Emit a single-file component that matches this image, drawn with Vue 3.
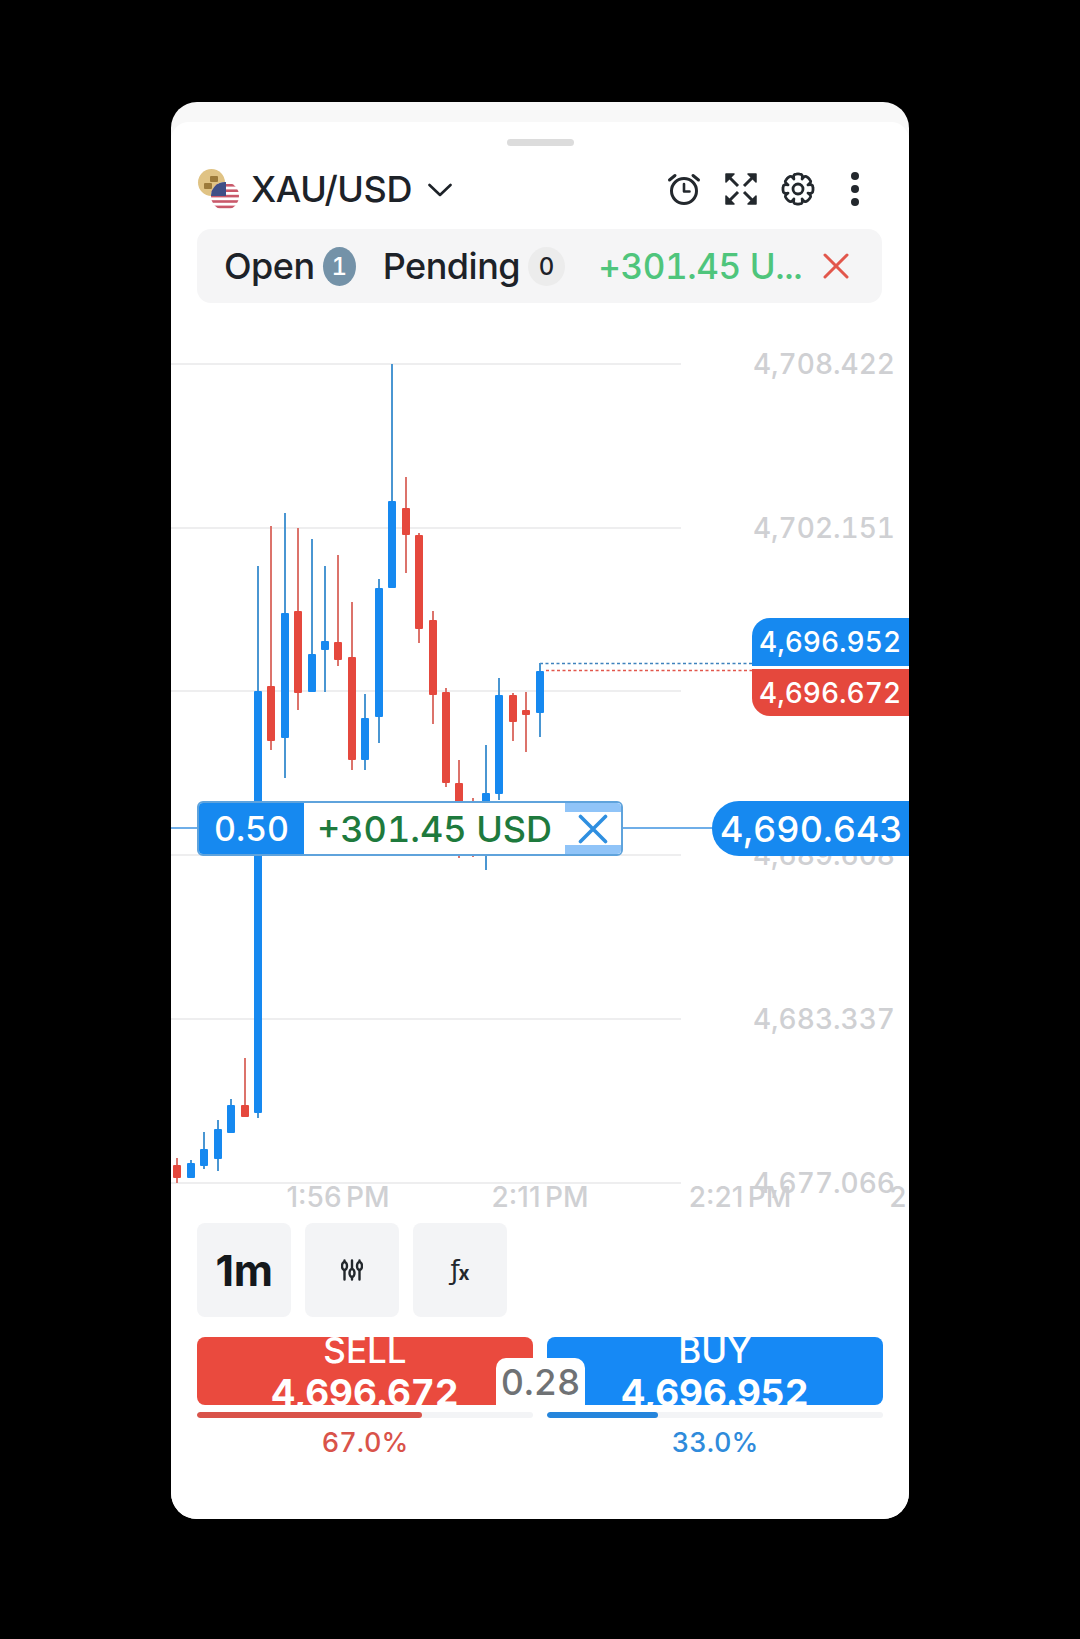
<script setup>
const candles = [
  [177, 1158, 1183, 1165, 1178, 'r'],
  [191, 1160, 1178, 1163, 1178, 'b'],
  [204, 1132, 1169, 1149, 1166, 'b'],
  [218, 1120, 1171, 1129, 1159, 'b'],
  [231, 1099, 1133, 1105, 1133, 'b'],
  [245, 1058, 1117, 1105, 1117, 'r'],
  [258, 566, 1118, 691, 1113, 'b'],
  [271, 526, 750, 686, 741, 'r'],
  [285, 513, 778, 613, 738, 'b'],
  [298, 528, 710, 611, 693, 'r'],
  [312, 539, 692, 654, 692, 'b'],
  [325, 566, 692, 641, 650, 'b'],
  [338, 555, 666, 642, 660, 'r'],
  [352, 602, 770, 657, 760, 'r'],
  [365, 694, 770, 718, 760, 'b'],
  [379, 579, 743, 588, 717, 'b'],
  [392, 364, 588, 501, 588, 'b'],
  [406, 477, 573, 508, 535, 'r'],
  [419, 533, 643, 535, 629, 'r'],
  [433, 611, 724, 620, 695, 'r'],
  [446, 688, 787, 692, 783, 'r'],
  [459, 760, 858, 783, 830, 'r'],
  [473, 798, 857, 810, 815, 'r'],
  [486, 745, 870, 793, 812, 'b'],
  [499, 678, 800, 695, 794, 'b'],
  [513, 693, 741, 695, 722, 'r'],
  [526, 692, 752, 710, 715, 'r'],
  [540, 663, 737, 671, 713, 'b'],
]

const gridLines = [364, 528, 691, 855, 1019, 1183]
const priceLabels = [
  ['4,708.422', 364],
  ['4,702.151', 528],
  ['4,689.608', 855],
  ['4,683.337', 1019],
  ['4,677.066', 1183],
]
const timeLabels = [
  ['1:56 PM', 338],
  ['2:11 PM', 540],
  ['2:21 PM', 740],
  ['2', 898],
]

// scalloped 8 lobe outline for the settings icon
function gearPath() {
  const lobes = 8
  let d = ''
  for (let i = 0; i < lobes; i++) {
    const a = (i / lobes) * Math.PI * 2
    const step = Math.PI / lobes
    const p = (r, t) => `${(17 + r * Math.cos(t)).toFixed(2)} ${(17 + r * Math.sin(t)).toFixed(2)}`
    d += `${i === 0 ? 'M' : 'L'}${p(10.8, a - step)} `
    d += `C${p(13.5, a - step * 0.9)} ${p(15.6, a - step * 0.75)} ${p(15, a - step * 0.3)} `
    d += `C${p(15.2, a)} ${p(15.2, a)} ${p(15, a + step * 0.3)} `
    d += `C${p(15.6, a + step * 0.75)} ${p(13.5, a + step * 0.9)} ${p(10.8, a + step)} `
  }
  return d + 'Z'
}
const gear = gearPath()
</script>

<template>
  <div class="page">
    <div class="card">
      <div class="sheet">
        <div class="handle"></div>

        <div class="header">
          <svg class="pair" width="44" height="44" viewBox="0 0 44 44">
            <defs>
              <clipPath id="flagClip"><circle cx="28" cy="28" r="14" /></clipPath>
            </defs>
            <circle cx="14.5" cy="14.5" r="13.5" fill="#e0c384" />
            <rect x="13" y="8" width="8" height="6" rx="1" fill="#9c7a3a" />
            <rect x="7" y="15" width="8" height="6" rx="1" fill="#9c7a3a" />
            <g clip-path="url(#flagClip)">
              <rect x="14" y="14" width="28" height="28" fill="#fff" />
              <rect x="14" y="16" width="28" height="2.6" fill="#c9596a" />
              <rect x="14" y="21.4" width="28" height="2.6" fill="#c9596a" />
              <rect x="14" y="26.8" width="28" height="2.6" fill="#c9596a" />
              <rect x="14" y="32.2" width="28" height="2.6" fill="#c9596a" />
              <rect x="14" y="37.6" width="28" height="2.6" fill="#c9596a" />
              <rect x="14" y="14" width="15" height="14" fill="#3f4f86" />
            </g>
          </svg>
          <span class="symbol">XAU/USD</span>
          <svg class="chevron" width="24" height="14" viewBox="0 0 24 14">
            <path d="M1.5 2 12 12 22.500 2" fill="none" stroke="#1d2228" stroke-width="2.600" stroke-linecap="round" stroke-linejoin="round" />
          </svg>
          <div class="tools">
            <svg class="tool" width="34" height="34" viewBox="0 0 34 34" fill="none" stroke="#23282d" stroke-width="3" stroke-linecap="round" stroke-linejoin="round">
              <circle cx="17" cy="19" r="12.500" />
              <path d="M17 12v7.500h5.500" stroke-width="2.600" />
              <path d="M2.500 8 8 3.500M31.500 8 26 3.500" />
            </svg>
            <svg class="tool" width="34" height="34" viewBox="0 0 34 34" fill="#23282d" stroke="#23282d" stroke-width="3">
              <path d="M2 10V2h8z" stroke-width="1.500" stroke-linejoin="round" />
              <path d="M5 5l9 9" />
              <path d="M32 10V2h-8z" stroke-width="1.500" stroke-linejoin="round" />
              <path d="M29 5l-9 9" />
              <path d="M2 24v8h8z" stroke-width="1.500" stroke-linejoin="round" />
              <path d="M5 29l9-9" />
              <path d="M32 24v8h-8z" stroke-width="1.500" stroke-linejoin="round" />
              <path d="M29 29l-9-9" />
            </svg>
            <svg class="tool" width="34" height="34" viewBox="0 0 34 34" fill="none" stroke="#23282d" stroke-width="2.800" stroke-linejoin="round">
              <path :d="gear" />
              <circle cx="17" cy="17" r="5" />
            </svg>
            <div class="dots"><i></i><i></i><i></i></div>
          </div>
        </div>

        <div class="tabs">
          <span class="tab">Open</span>
          <span class="badge badge-open">1</span>
          <span class="tab tab-pending">Pending</span>
          <span class="badge badge-pending">0</span>
          <span class="pnl">+301.45 U...</span>
          <svg class="close-all" width="26" height="26" viewBox="0 0 26 26">
            <path d="M2 2l22 22M24 2 2 24" stroke="#e2574c" stroke-width="3" stroke-linecap="round" />
          </svg>
        </div>

        <div class="chart">
          <svg class="plot" width="738" height="920" viewBox="171 303 738 920">
            <line v-for="y in gridLines" :key="y" x1="171" x2="681" :y1="y" :y2="y" stroke="#e8e9ea" stroke-width="1.500" />
            <text v-for="p in priceLabels" :key="p[0]" x="895" :y="p[1] + 10" text-anchor="end" class="axis axis-price">{{ p[0] }}</text>
            <text v-for="t in timeLabels" :key="t[0]" :x="t[1]" y="1207" text-anchor="middle" class="axis axis-time">{{ t[0] }}</text>
            <line x1="540" x2="752" y1="663.500" y2="663.500" stroke="#3f82bd" stroke-width="1.500" stroke-dasharray="3 2.500" />
            <line x1="546" x2="752" y1="670.500" y2="670.500" stroke="#e2574c" stroke-width="1.500" stroke-dasharray="3 2.500" />
            <line x1="171" x2="712" y1="828" y2="828" stroke="#3f93e0" stroke-width="1.600" />
            <g v-for="c in candles" :key="c[0]">
              <line :x1="c[0]" :x2="c[0]" :y1="c[1]" :y2="c[2]" :stroke="c[5] === 'b' ? '#4a96d2' : '#dc736b'" stroke-width="2" />
              <rect :x="c[0] - 4" :y="c[3]" width="8" :height="c[4] - c[3]" rx="1" :fill="c[5] === 'b' ? '#1689f0' : '#e5483d'" />
            </g>
          </svg>

          <div class="last-price ask">4,696.952</div>
          <div class="last-price bid">4,696.672</div>
          <div class="order-price">4,690.643</div>

          <div class="order-tag">
            <span class="lots">0.50</span>
            <span class="profit">+301.45 USD</span>
            <span class="order-close">
              <svg width="30" height="30" viewBox="0 0 30 30">
                <path d="M2.500 2.500l25 25M27.500 2.500l-25 25" stroke="#2f8fe0" stroke-width="3.600" stroke-linecap="round" />
              </svg>
            </span>
          </div>
        </div>

        <div class="toolbar">
          <div class="tbtn interval">1m</div>
          <div class="tbtn">
            <svg width="22" height="22" viewBox="0 0 22 22" fill="none" stroke="#23282d" stroke-width="2.400" stroke-linecap="round">
              <path d="M3.500 1.500v1M3.500 11v9.500M11 1.500v8M11 18v2.500M18.500 1.500v1M18.500 11v9.500" />
              <ellipse cx="3.500" cy="7" rx="2.500" ry="4" />
              <ellipse cx="11" cy="14" rx="2.500" ry="4" />
              <ellipse cx="18.500" cy="7" rx="2.500" ry="4" />
            </svg>
          </div>
          <div class="tbtn fx"><span class="fx-f">ƒ</span><span class="fx-x">x</span></div>
        </div>

        <div class="trade">
          <div class="side sell">
            <span class="side-name">SELL</span>
            <span class="side-value">4,696.672</span>
          </div>
          <div class="side buy">
            <span class="side-name">BUY</span>
            <span class="side-value">4,696.952</span>
          </div>
          <div class="spread">0.28</div>
        </div>

        <div class="sentiment">
          <div class="sent-col">
            <div class="track"><div class="fill fill-sell" :style="{ width: '67%' }"></div></div>
            <div class="pct pct-sell">67.0%</div>
          </div>
          <div class="sent-col">
            <div class="track"><div class="fill fill-buy" :style="{ width: '33%' }"></div></div>
            <div class="pct pct-buy">33.0%</div>
          </div>
        </div>
      </div>
    </div>
  </div>
</template>

<style>
html, body {
  background: #000;
}
</style>

<style scoped>
.page {
  height: 1639px;
  background: #000;
  padding-top: 102px;
  box-sizing: border-box;
  font-family: Inter, "Liberation Sans", sans-serif;
  font-variant-numeric: tabular-nums;
  color: #1d2228;
}

.card {
  width: 738px;
  height: 1417px;
  margin: 0 auto;
  background: #f8f8f8;
  border-radius: 26px;
  overflow: hidden;
  padding-top: 20px;
  box-sizing: border-box;
}

.sheet {
  height: 100%;
  background: #fff;
  border-radius: 18px 18px 0 0;
  padding-top: 17px;
  box-sizing: border-box;
}

.handle {
  width: 67px;
  height: 7px;
  margin: 0 auto;
  border-radius: 4px;
  background: #dcdcdc;
}

.header {
  display: flex;
  align-items: center;
  height: 44px;
  margin-top: 21px;
  padding: 0 26px;
}

.pair {
  flex: none;
  margin-right: 10px;
  margin-top: 2px;
}

.symbol {
  font-size: 36px;
  font-weight: 500;
  letter-spacing: -0.4px;
  line-height: 44px;
}

.chevron {
  margin-left: 16px;
  margin-top: 2px;
}

.tools {
  display: flex;
  align-items: center;
  gap: 23px;
  margin-left: auto;
  margin-right: 24px;
}

.dots {
  display: flex;
  flex-direction: column;
  gap: 5px;
  margin-left: 13px;
}

.dots i {
  display: block;
  width: 8px;
  height: 8px;
  border-radius: 50%;
  background: #23282d;
}

.tabs {
  display: flex;
  align-items: center;
  height: 74px;
  margin: 18px 27px 0 26px;
  padding: 0 33px 0 27px;
  background: #f5f5f6;
  border-radius: 14px;
}

.tab {
  font-size: 36px;
  font-weight: 500;
  letter-spacing: -0.5px;
}

.tab-pending {
  margin-left: 27px;
}

.badge {
  display: flex;
  align-items: center;
  justify-content: center;
  width: 33px;
  height: 39px;
  margin-left: 8px;
  border-radius: 50%;
  font-size: 24px;
  font-weight: 500;
}

.badge-open {
  background: #7492a8;
  color: #fff;
}

.badge-pending {
  width: 37px;
  margin-left: 8px;
  background: #ececec;
}

.pnl {
  margin-left: 33px;
  font-size: 35px;
  font-weight: 500;
  letter-spacing: -0.4px;
  color: #4fc57c;
  white-space: nowrap;
}

.close-all {
  margin-left: auto;
}

.chart {
  position: relative;
  height: 920px;
}

.plot {
  display: block;
}

.axis {
  font-weight: 500;
  fill: #cfd0d3;
  font-family: Inter, "Liberation Sans", sans-serif;
}

.axis-price {
  font-size: 28px;
}

.axis-time {
  font-size: 28px;
  font-variant-numeric: normal;
  word-spacing: -3px;
}

/* price tags sit on top of the plot */
.last-price {
  position: absolute;
  left: 581px;
  width: 157px;
  box-sizing: border-box;
  padding-left: 7px;
  color: #fff;
  font-size: 28px;
  font-weight: 500;
  display: flex;
  align-items: center;
}

.ask {
  top: 315px;
  height: 48px;
  background: #1689f0;
  border-radius: 18px 0 0 0;
}

.bid {
  top: 366px;
  height: 47px;
  background: #e5483d;
  border-radius: 0 0 0 18px;
}

.order-price {
  position: absolute;
  top: 498px;
  left: 541px;
  width: 197px;
  height: 55px;
  box-sizing: border-box;
  padding-left: 8px;
  display: flex;
  align-items: center;
  background: #1689f0;
  border-radius: 27px 0 0 27px;
  color: #fff;
  font-size: 36px;
  font-weight: 500;
}

.order-tag {
  position: absolute;
  top: 498px;
  left: 26px;
  width: 426px;
  height: 55px;
  box-sizing: border-box;
  display: flex;
  background: #fff;
  border: 2px solid #5fa3dc;
  border-radius: 6px;
  overflow: hidden;
}

.lots {
  flex: none;
  width: 105px;
  display: flex;
  align-items: center;
  justify-content: center;
  background: #1689f0;
  color: #fff;
  font-size: 34px;
  font-weight: 500;
}

.profit {
  flex: 1;
  display: flex;
  align-items: center;
  justify-content: center;
  color: #1e7a3d;
  font-size: 36px;
  font-weight: 500;
  white-space: nowrap;
}

.order-close {
  flex: none;
  width: 56px;
  display: flex;
  align-items: center;
  justify-content: center;
  background: #fff;
  border-top: 9px solid #90c4f8;
  border-bottom: 9px solid #90c4f8;
  box-sizing: border-box;
}

.toolbar {
  display: flex;
  gap: 14px;
  padding: 0 26px;
}

.tbtn {
  width: 94px;
  height: 94px;
  display: flex;
  align-items: center;
  justify-content: center;
  background: #f3f4f6;
  border-radius: 8px;
}

.interval {
  font-size: 43px;
  font-weight: 700;
  font-variant-numeric: normal;
  letter-spacing: -0.5px;
  color: #14181c;
}

.fx {
  color: #23282d;
}

.fx-f {
  font-family: "DejaVu Sans", sans-serif;
  font-size: 26px;
  line-height: 1;
}

.fx-x {
  font-size: 19px;
  font-weight: 700;
  margin-top: 6px;
  margin-left: -1px;
}

.trade {
  position: relative;
  display: flex;
  gap: 14px;
  margin-top: 20px;
  padding: 0 26px;
}

.side {
  flex: 1;
  height: 68px;
  overflow: hidden;
  display: flex;
  flex-direction: column;
  align-items: center;
  border-radius: 8px;
  color: #fff;
}

.sell {
  background: #ea4a3e;
}

.buy {
  background: #1689f5;
}

.side-name {
  font-size: 35px;
  font-weight: 500;
  line-height: 26px;
}

.side-value {
  font-size: 37px;
  font-weight: 700;
  line-height: 40px;
  margin-top: 10px;
}

.spread {
  position: absolute;
  left: 325px;
  bottom: 0;
  width: 89px;
  height: 47px;
  display: flex;
  align-items: center;
  justify-content: center;
  background: #fff;
  border-radius: 10px 10px 0 0;
  color: #6f7275;
  font-size: 36px;
  font-weight: 500;
}

.sentiment {
  display: flex;
  gap: 14px;
  padding: 0 26px;
  margin-top: 7px;
}

.sent-col {
  flex: 1;
}

.track {
  height: 6px;
  border-radius: 3px;
  background: #f3f4f6;
  overflow: hidden;
}

.fill {
  height: 100%;
  border-radius: 3px;
}

.fill-sell {
  background: #d9534a;
}

.fill-buy {
  background: #2585dc;
}

.pct {
  margin-top: 8px;
  text-align: center;
  font-size: 27px;
  font-weight: 500;
  line-height: 34px;
}

.pct-sell {
  color: #d9534a;
}

.pct-buy {
  color: #2f8bdb;
}
</style>
